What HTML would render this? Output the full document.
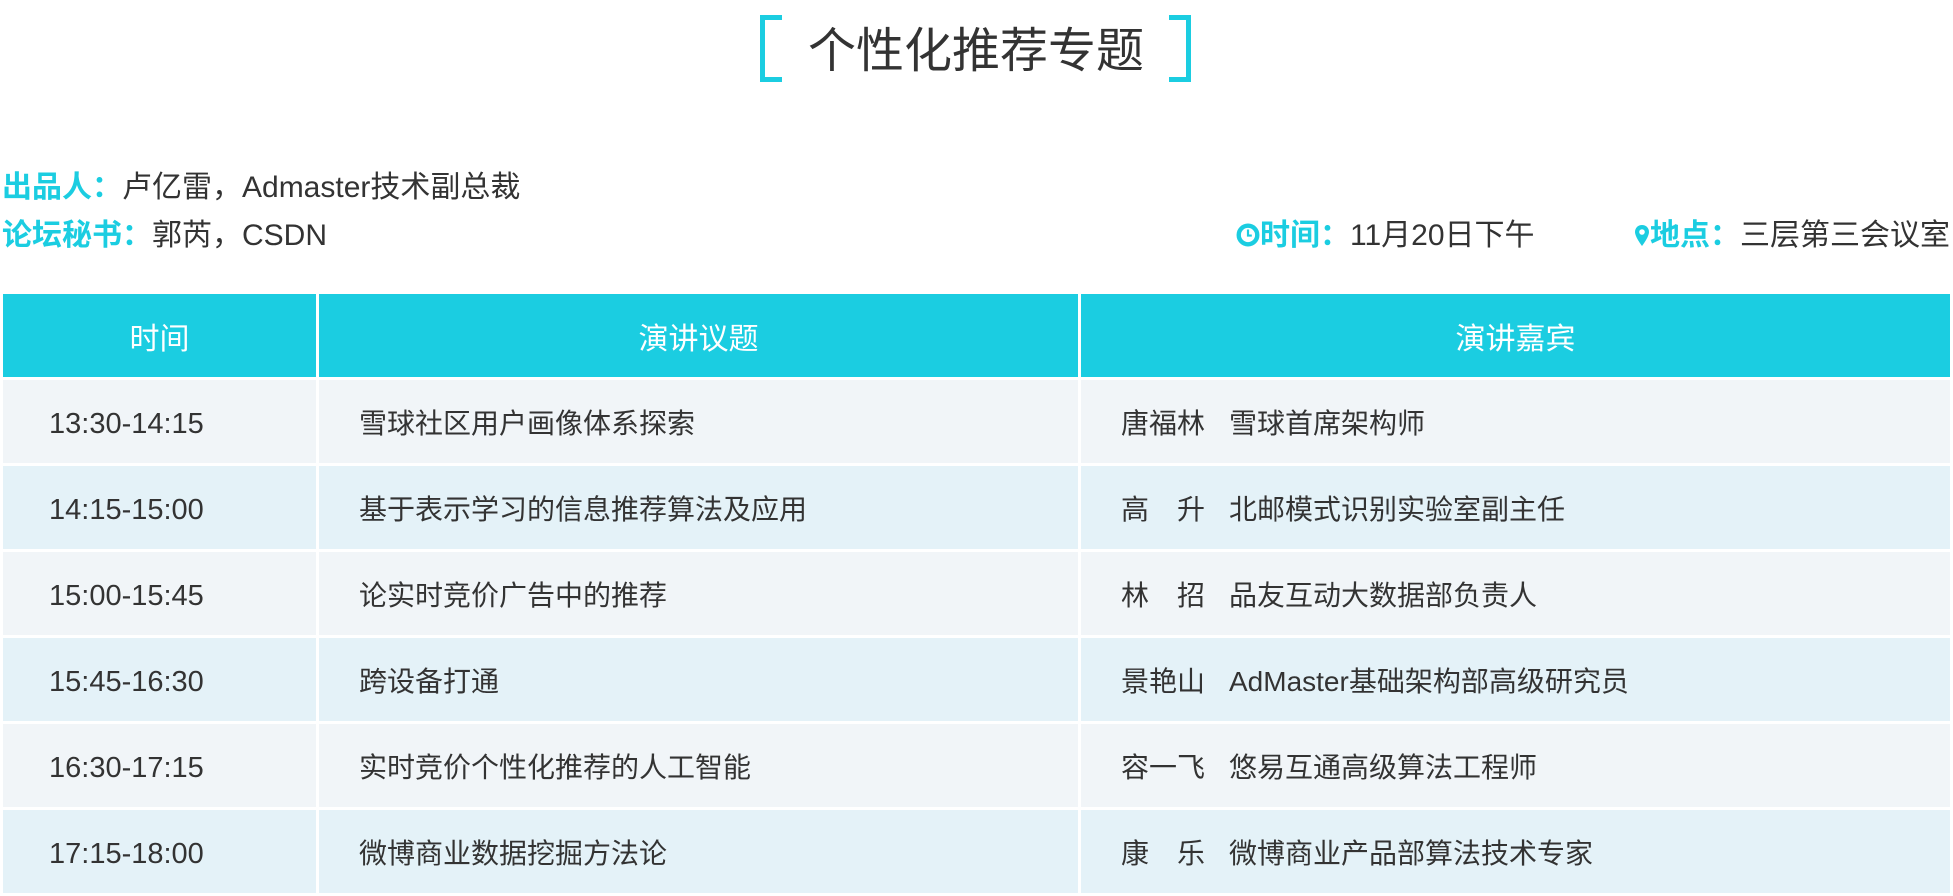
<!DOCTYPE html>
<html><head><meta charset="utf-8"><style>
*{margin:0;padding:0;box-sizing:border-box}
body{width:1953px;height:893px;background:#fff;font-family:"Liberation Sans","Noto Sans CJK SC",sans-serif;color:#333;position:relative;overflow:hidden}
.abs{position:absolute;white-space:nowrap}
.br{position:absolute;top:15px;width:22px;height:67px;border:5px solid #1bcde1}
.c{color:#1bcde1;font-weight:bold}
.info{font-size:30px;line-height:40px}
table{position:absolute;left:0;top:291px;width:1953px;border-collapse:collapse}
td,th{border:3px solid #fff;height:86px;font-size:28px;font-weight:normal;padding:0}
th{background:#1bcde1;color:#fff;text-align:center;font-size:30px}
tr:nth-child(even) td{background:#f1f5f8}
tr:nth-child(odd) td{background:#e4f2f8}
td.t{padding-left:46px;font-size:29px;padding-top:5px}
td.p{padding-left:40px}
td.s{padding-left:40px}
td.s span{display:inline-block;width:108px}
</style></head><body>
<div class="br" style="left:760px;border-right:none"></div>
<div class="br" style="left:1169px;border-left:none"></div>
<div class="abs" style="left:808px;top:19px;font-size:48px;line-height:66px;color:#333">个性化推荐专题</div>
<div class="abs info" style="left:2px;top:168px"><span class="c">出品人：</span>卢亿雷，Admaster技术副总裁</div>
<div class="abs info" style="left:2px;top:216px"><span class="c">论坛秘书：</span>郭芮，CSDN</div>
<div class="abs info" style="left:1236px;top:216px"><svg width="24" height="24" viewBox="0 0 22 22" style="vertical-align:-2px"><circle cx="11" cy="11" r="8.5" fill="none" stroke="#1bcde1" stroke-width="4"/><path d="M11 6v5.5h3.5" fill="none" stroke="#1bcde1" stroke-width="2"/></svg><span class="c">时间：</span>11月20日下午</div>
<div class="abs info" style="right:3px;top:216px"><svg width="16" height="24" viewBox="0 0 16 24" style="vertical-align:-3px"><path d="M8 1C4 1 1 4 1 8c0 5 7 14 7 14s7-9 7-14c0-4-3-7-7-7z" fill="#1bcde1"/><circle cx="8" cy="8" r="2.8" fill="#fff"/></svg><span class="c">地点：</span>三层第三会议室</div>
<table>
<tr><th style="width:316px">时间</th><th style="width:762px">演讲议题</th><th>演讲嘉宾</th></tr>
<tr><td class="t">13:30-14:15</td><td class="p">雪球社区用户画像体系探索</td><td class="s"><span>唐福林</span>雪球首席架构师</td></tr>
<tr><td class="t">14:15-15:00</td><td class="p">基于表示学习的信息推荐算法及应用</td><td class="s"><span>高　升</span>北邮模式识别实验室副主任</td></tr>
<tr><td class="t">15:00-15:45</td><td class="p">论实时竞价广告中的推荐</td><td class="s"><span>林　招</span>品友互动大数据部负责人</td></tr>
<tr><td class="t">15:45-16:30</td><td class="p">跨设备打通</td><td class="s"><span>景艳山</span>AdMaster基础架构部高级研究员</td></tr>
<tr><td class="t">16:30-17:15</td><td class="p">实时竞价个性化推荐的人工智能</td><td class="s"><span>容一飞</span>悠易互通高级算法工程师</td></tr>
<tr><td class="t">17:15-18:00</td><td class="p">微博商业数据挖掘方法论</td><td class="s"><span>康　乐</span>微博商业产品部算法技术专家</td></tr>
</table>
</body></html>
